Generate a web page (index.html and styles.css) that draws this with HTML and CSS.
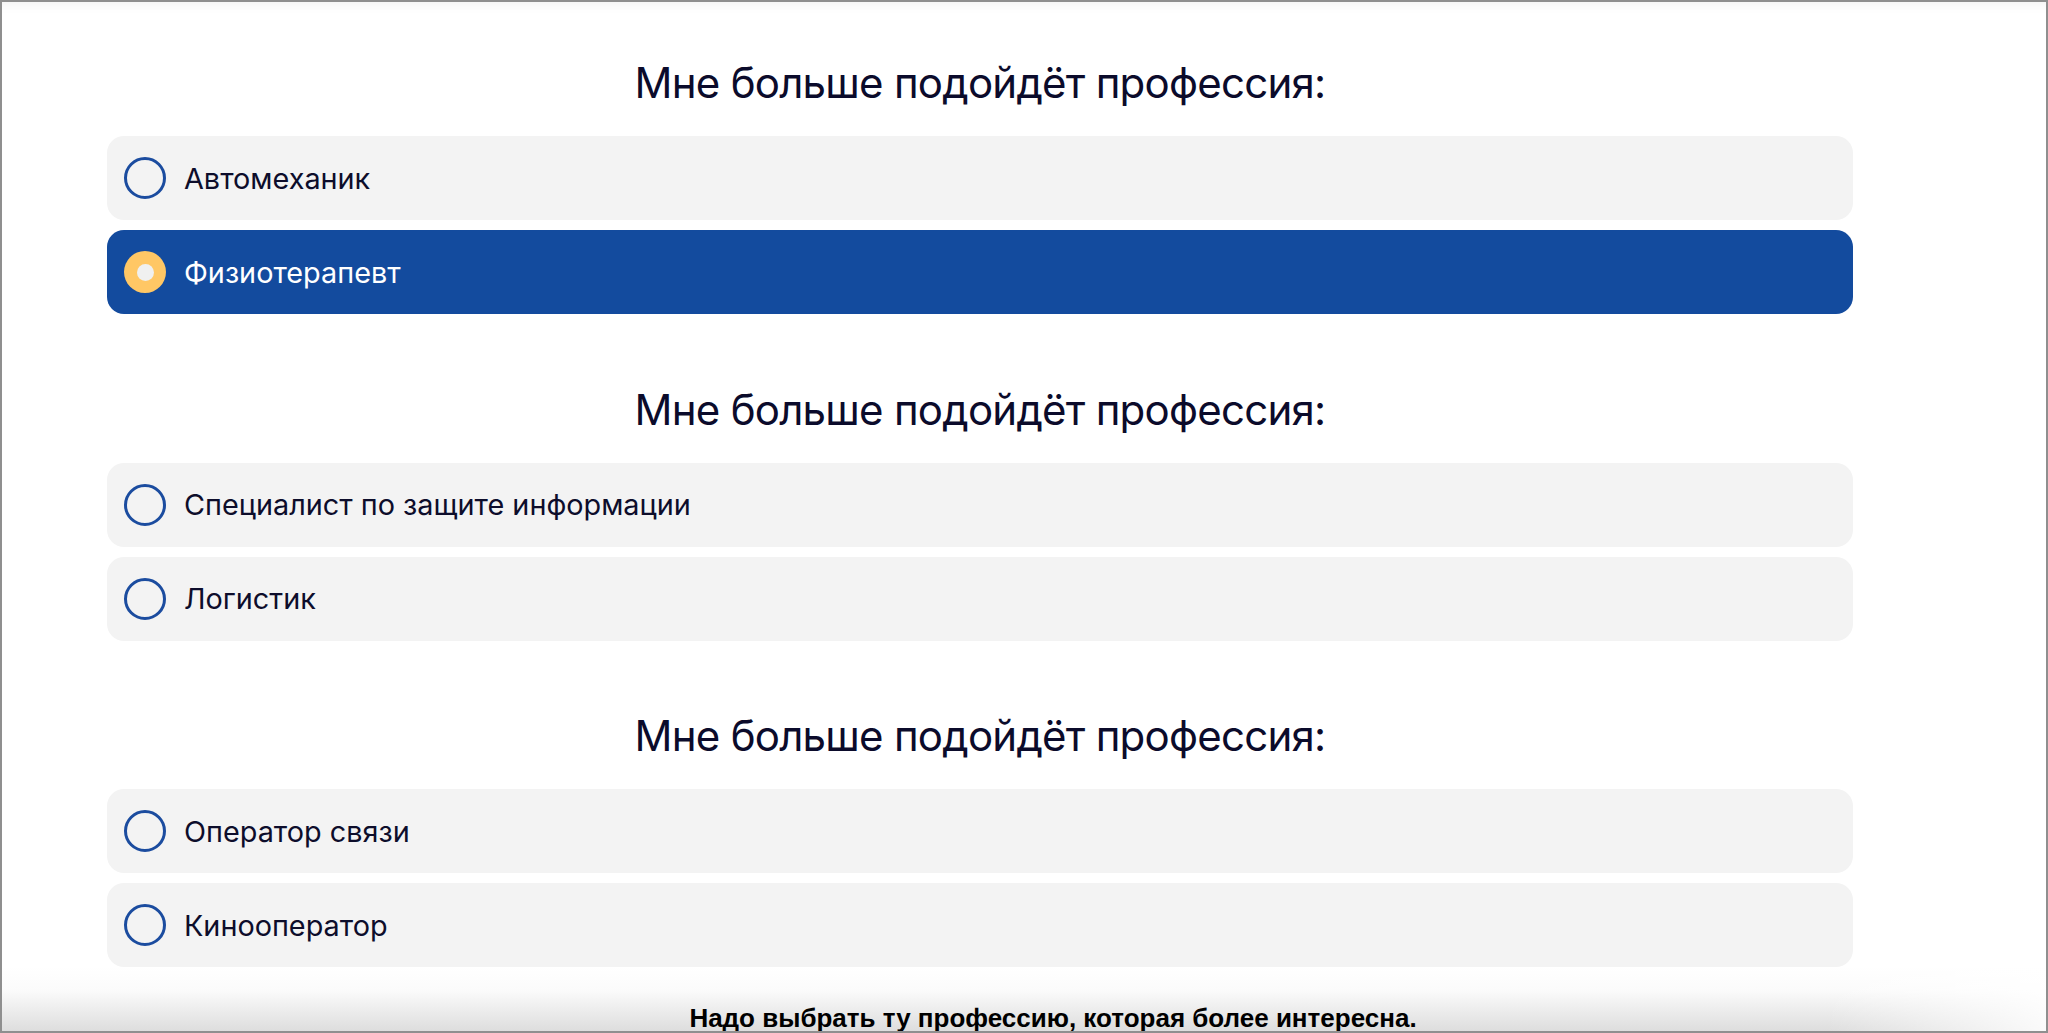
FILE: index.html
```html
<!DOCTYPE html>
<html lang="ru">
<head>
<meta charset="utf-8">
<title>Тест</title>
<link rel="stylesheet" href="styles.css">
</head>
<body>
<div class="frame">
  <main class="quiz">
    <section class="question">
      <h2 class="question-title">Мне больше подойдёт профессия:</h2>
      <div class="options">
        <label class="option"><span class="radio"></span><span class="option-text">Автомеханик</span></label>
        <label class="option option--selected"><span class="radio"></span><span class="option-text">Физиотерапевт</span></label>
      </div>
    </section>
    <section class="question">
      <h2 class="question-title">Мне больше подойдёт профессия:</h2>
      <div class="options">
        <label class="option"><span class="radio"></span><span class="option-text">Специалист по защите информации</span></label>
        <label class="option"><span class="radio"></span><span class="option-text">Логистик</span></label>
      </div>
    </section>
    <section class="question">
      <h2 class="question-title">Мне больше подойдёт профессия:</h2>
      <div class="options">
        <label class="option"><span class="radio"></span><span class="option-text">Оператор связи</span></label>
        <label class="option"><span class="radio"></span><span class="option-text">Кинооператор</span></label>
      </div>
    </section>
  </main>
  <footer class="hint">Надо выбрать ту профессию, которая более интересна.</footer>
</div>
</body>
</html>
```
FILE: styles.css
```css
html, body {
  margin: 0;
  padding: 0;
  background: #ffffff;
}

.frame {
  height: 100vh;
  box-sizing: border-box;
  border: 2px solid #8f8f8f;
  overflow: hidden;
  background: #ffffff;
  box-shadow: inset 0 14px 14px -14px rgba(0, 0, 0, 0.07);
  display: flex;
  flex-direction: column;
}

.quiz {
  margin-left: 105px;
  width: 1746px;
  padding-top: 55px;
  display: flex;
  flex-direction: column;
  gap: 69.5px;
  flex-shrink: 0;
}

.question-title {
  margin: 0 0 27px 0;
  font-family: Inter, "Noto Sans", sans-serif;
  font-weight: 400;
  font-size: 42px;
  letter-spacing: -0.75px;
  line-height: 52px;
  text-align: center;
  color: #0b0b2b;
}

.options {
  display: flex;
  flex-direction: column;
  gap: 10px;
}

.option {
  height: 84px;
  box-sizing: border-box;
  border-radius: 17px;
  background: #f3f3f3;
  display: flex;
  align-items: center;
  padding-left: 17px;
  gap: 18px;
  cursor: pointer;
}

.radio {
  width: 42px;
  height: 42px;
  box-sizing: border-box;
  border: 3.5px solid #1b4c9f;
  border-radius: 50%;
  flex-shrink: 0;
  display: flex;
  align-items: center;
  justify-content: center;
}

.option-text {
  font-family: Inter, "Noto Sans", sans-serif;
  font-weight: 400;
  font-size: 28.8px;
  color: #0d0d2b;
}

.option--selected {
  background: #134b9e;
}

.option--selected .radio {
  border: none;
  background: #ffc765;
}

.option--selected .radio::after {
  content: "";
  width: 17px;
  height: 17px;
  border-radius: 50%;
  background: #f0f0f0;
}

.option--selected .option-text {
  color: #ffffff;
}

.hint {
  position: relative;
  flex: 1 0 auto;
  padding-top: 36px;
  padding-left: 58px;
  text-align: center;
  font-family: "Liberation Sans", Arial, sans-serif;
  font-weight: 700;
  font-size: 26px;
  line-height: 30px;
  color: #000000;
  background: linear-gradient(to bottom, #ffffff 0%, #fbfbfb 35%, #dcdcdc 100%);
}

.hint::after {
  content: "";
  position: absolute;
  top: 0;
  right: 0;
  bottom: 0;
  width: 220px;
  background: linear-gradient(to right, rgba(255, 255, 255, 0) 0%, rgba(255, 255, 255, 0.85) 100%);
  pointer-events: none;
}
```
